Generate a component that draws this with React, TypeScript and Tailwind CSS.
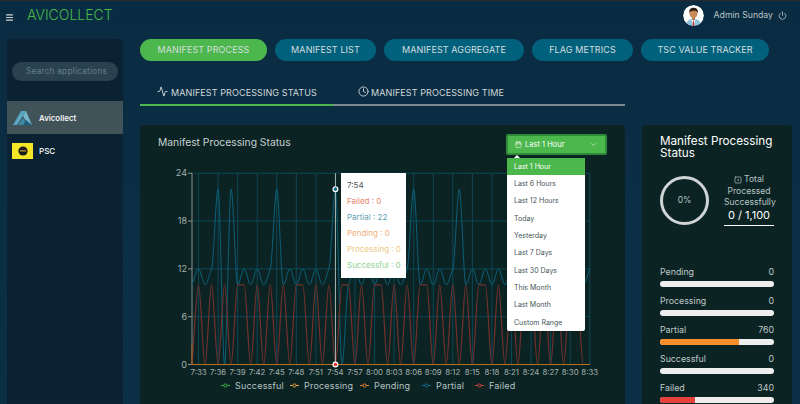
import React from 'react';
import { Activity, Calendar, ChevronDown, Clock, Menu, Power, SquareDot } from 'lucide-react';

const tabs = [
  { label: 'MANIFEST PROCESS', cls: 'w-[127px]' },
  { label: 'MANIFEST LIST', cls: 'w-[101px]' },
  { label: 'MANIFEST AGGREGATE', cls: 'w-[140px]' },
  { label: 'FLAG METRICS', cls: 'w-[101px]' },
  { label: 'TSC VALUE TRACKER', cls: 'w-[128px]' },
];
const ranges = ['Last 1 Hour', 'Last 6 Hours', 'Last 12 Hours', 'Today', 'Yesterday', 'Last 7 Days', 'Last 30 Days', 'This Month', 'Last Month', 'Custom Range'];
const yTicks = [0, 6, 12, 18, 24];
const legend = [
  { label: 'Successful', color: '#3fae49', cls: 'w-[69px]' },
  { label: 'Processing', color: '#e8a33d', cls: 'w-[70px]' },
  { label: 'Pending', color: '#e8822d', cls: 'w-[62px]' },
  { label: 'Partial', color: '#0f6f8c', cls: 'w-[53px]' },
  { label: 'Failed', color: '#d9403a', cls: 'w-[40px]' },
];
const stats = [
  { label: 'Pending', value: '0', pct: 0, color: '#f28c28' },
  { label: 'Processing', value: '0', pct: 0, color: '#f28c28' },
  { label: 'Partial', value: '760', pct: 69, color: '#f58f2c' },
  { label: 'Successful', value: '0', pct: 0, color: '#f28c28' },
  { label: 'Failed', value: '340', pct: 31, color: '#e8413c' },
];

// one point a minute from 7:32 to 8:33
const partial = [
  10, 12, 10, 12, 22, 0, 22, 10, 12, 10, 12, 10, 12, 22, 10, 12, 10, 12, 10, 12, 10, 12, 22, 0, 10, 12, 10, 12, 10, 12, 10,
  12, 10, 12, 22, 10, 12, 10, 12, 10, 12, 22, 10, 12, 10, 12, 10, 12, 10, 12, 10, 12, 10, 12, 10, 12, 10, 12, 10, 12, 10, 12,
];
const failedAt = [1, 3, 5, 7, 8, 10, 12, 14, 16, 17, 19, 21, 23, 24, 26, 28, 29, 31, 33, 35, 36, 38, 40, 42, 44, 45, 47, 49, 51, 52, 54, 56, 58, 59];
const failed = partial.map((_, i) => (failedAt.includes(i) ? 10 : 0));

const STEP = 6.52;
const X0 = 52;
const Y0 = 199.5;
const UNIT = 7.97;
const px = (i: number) => X0 + i * STEP;
const py = (v: number) => Y0 - v * UNIT;

// same idea as recharts' "monotone" line
const monotonePath = (values: number[]) => {
  const pts = values.map((v, i) => [px(i), py(v)]);
  const slopes = pts.slice(1).map((p, i) => (p[1] - pts[i][1]) / (p[0] - pts[i][0]));
  const tangents = pts.map((_, i) => {
    if (i === 0) return slopes[0];
    if (i === pts.length - 1) return slopes[i - 1];
    const a = slopes[i - 1];
    const b = slopes[i];
    if (a * b <= 0) return 0;
    const s = a < 0 ? -1 : 1;
    return s * Math.min(Math.abs(a), Math.abs(b), 0.25 * Math.abs(a + b));
  });
  let d = `M${pts[0][0]},${pts[0][1]}`;
  for (let i = 1; i < pts.length; i++) {
    const dx = (pts[i][0] - pts[i - 1][0]) / 3;
    d += `C${pts[i - 1][0] + dx},${pts[i - 1][1] + tangents[i - 1] * dx} ${pts[i][0] - dx},${pts[i][1] - tangents[i] * dx} ${pts[i][0]},${pts[i][1]}`;
  }
  return d;
};

const timeLabel = (i: number) => {
  const total = 7 * 60 + 33 + i * 3;
  return `${Math.floor(total / 60)}:${String(total % 60).padStart(2, '0')}`;
};

const Chart = () => (
  <svg width="485" height="214" className="block">
    {yTicks.map((t) => (
      <g key={t}>
        {t > 0 && <line x1={X0} x2={450} y1={py(t)} y2={py(t)} stroke="#0e4656" strokeWidth="1" />}
        <line x1={X0 - 4} x2={X0} y1={py(t)} y2={py(t)} stroke="#8d9a9a" strokeWidth="1" />
        <text x={X0 - 5} y={py(t) + 3} textAnchor="end" fontSize="9" fill="#a5b0b0">{t}</text>
      </g>
    ))}
    {Array.from({ length: 21 }, (_, i) => {
      const x = px(1 + i * 3);
      return (
        <g key={i}>
          <line x1={x} x2={x} y1={py(24)} y2={Y0} stroke="#0e4656" strokeWidth="1" />
          <text x={x} y={Y0 + 10.5} textAnchor="middle" fontSize="7.8" fill="#a5b0b0">{timeLabel(i)}</text>
        </g>
      );
    })}
    <line x1={X0} x2={X0} y1={py(24)} y2={Y0} stroke="#75827f" strokeWidth="1.2" />
    <path d={monotonePath(partial)} fill="none" stroke="#0b5f78" strokeWidth="1" />
    <path d={monotonePath(failed)} fill="none" stroke="#73302d" strokeWidth="1.2" />
    <path d={`M${X0},${Y0}V${Y0 - 19}`} fill="none" stroke="#a8641f" strokeWidth="1" />
    <line x1={X0} x2={450} y1={Y0} y2={Y0} stroke="#b9701f" strokeWidth="1" />
    <line x1={px(22)} x2={px(22)} y1={py(24)} y2={Y0} stroke="#aab3b2" strokeWidth="1" />
    <circle cx={px(22)} cy={py(22)} r="2.4" fill="#0f6f8c" stroke="#fff" strokeWidth="1.2" />
    <circle cx={px(22)} cy={py(0)} r="2.4" fill="#e3342f" stroke="#fff" strokeWidth="1.2" />
  </svg>
);

const AviLogo = () => (
  <svg width="20" height="16" viewBox="0 0 20 16">
    <path d="M0 15 L8 1 H13 L8 9 L4 15 Z" fill="#5ba6c0" />
    <path d="M13 1 L19 15 H15 L10 6 Z" fill="#74b6cc" />
    <path d="M5 15 L10 8 L14 15 Z" fill="#3d8aa6" />
    <path d="M10 15 L13 10 L19 15 Z" fill="#1d5f78" />
  </svg>
);

const PscLogo = () => (
  <div className="flex h-[16px] w-[21px] items-center justify-center bg-[#f5e725]">
    <svg width="10" height="10" viewBox="0 0 10 10">
      <circle cx="5" cy="5" r="4.6" fill="#1c1c1c" />
      <rect x="2" y="4.3" width="6" height="1.2" fill="#c9a227" />
    </svg>
  </div>
);

const Avatar = () => (
  <svg width="21" height="21" viewBox="0 0 21 21" className="rounded-full">
    <circle cx="10.5" cy="10.5" r="10.5" fill="#fff" />
    <path d="M3 21 C3 15 7 14 10.5 14 C14 14 18 15 18 21 Z" fill="#8fc3dc" />
    <path d="M8.5 14 L10.5 16 L12.5 14 L11 21 H10 Z" fill="#fff" />
    <path d="M10 16 H11 L11.4 21 H9.6 Z" fill="#c9302c" />
    <rect x="9" y="11" width="3" height="4" fill="#b97a4a" />
    <ellipse cx="10.5" cy="8.5" rx="4" ry="4.6" fill="#c98a58" />
    <path d="M6.3 8 C5.8 3.5 9 2.5 11 2.7 C14.5 3 15.2 5.5 14.7 8 C14 6 12.5 5.6 10.5 5.8 C8.5 6 7 6.2 6.3 8 Z" fill="#2b1d14" />
  </svg>
);

const LegendMark = ({ color }: { color: string }) => (
  <svg width="9" height="5" viewBox="0 0 9 5" className="shrink-0">
    <line x1="0" x2="9" y1="2.5" y2="2.5" stroke={color} strokeWidth="1" />
    <circle cx="4.5" cy="2.5" r="1.6" fill="#0b2423" stroke={color} strokeWidth="1" />
  </svg>
);

export default function App() {
  return (
    <div className="flex h-[404px] w-[800px] flex-col overflow-hidden border-t border-[#2a2a2a] bg-gradient-to-b from-[#0a2c42] to-[#0b3046] font-['Inter',sans-serif]">
      {/* Header */}
      <div className="flex h-[38px] shrink-0 items-start pt-1">
        <Menu size={9} strokeWidth={3} className="ml-[5px] mt-[8px] text-[#c8d0d0]" />
        <div className="ml-[13px] text-[14px] font-light leading-[20px] text-[#46b948]">AVICOLLECT</div>
        <div className="ml-auto flex items-center pr-[13px]">
          <Avatar />
          <span className="ml-[10px] text-[8.7px] text-[#b9c3c6]">Admin Sunday</span>
          <Power size={9} className="ml-[5px] text-[#c8d0d0]" />
        </div>
      </div>

      <div className="flex min-h-0 flex-1 pl-[7px]">
        {/* Sidebar */}
        <div className="w-[116px] shrink-0 rounded-t-sm bg-[#0a2231]">
          <div className="mx-[5px] mt-[23px] flex h-[19px] items-center rounded-full bg-[#2a424f] pl-[14px] text-[8.3px] tracking-[0.2px] text-[#667f86]">
            Search applications
          </div>
          <div className="mt-5 flex h-[33px] items-center gap-[6px] bg-[#3f5359] pl-[6px] text-[8px] font-medium text-white">
            <AviLogo />
            Avicollect
          </div>
          <div className="flex h-[33px] items-center gap-[6px] pl-[5px] text-[8px] font-medium text-white">
            <PscLogo />
            PSC
          </div>
        </div>

        {/* Main */}
        <div className="ml-[17px] min-w-0 flex-1">
          <div className="flex gap-2">
            {tabs.map((t, i) => (
              <div
                key={t.label}
                className={`flex h-[22px] items-center justify-center whitespace-nowrap rounded-full text-[9px] tracking-[0.1px] text-[#d5dedf] ${t.cls} ${
                  i === 0 ? 'bg-[#4cb74c]' : 'bg-[#01607c]'
                }`}
              >
                {t.label}
              </div>
            ))}
          </div>

          <div className="mt-[24px] flex h-[21px] w-[485px] border-b-2 border-[#7d8a8e] text-[9px] tracking-[0.1px] text-[#d0d8da]">
            <div className="-mb-[2px] flex h-[21px] w-[193px] items-start gap-[3px] border-b-2 border-[#4cb74c] pl-[17px] pt-[1px]">
              <Activity size={11} />
              MANIFEST PROCESSING STATUS
            </div>
            <div className="flex items-start gap-[2px] pl-[25px] pt-[1px]">
              <Clock size={11} />
              MANIFEST PROCESSING TIME
            </div>
          </div>

          <div className="mt-[19px] flex gap-[17px]">
            {/* Chart panel */}
            <div className="relative h-[279px] w-[485px] shrink-0 rounded-t-sm bg-[#0b2423]">
              <div className="flex h-[40px] items-start justify-between pl-[18px] pr-[18px] pt-[9px]">
                <div className="pt-[1px] text-[10.3px] leading-[14px] text-[#c8d0d0]">Manifest Processing Status</div>
                <div className="flex h-[21px] w-[101px] items-center rounded-[2px] border-2 border-[#2f8b3a] bg-[#4cb74c] pl-[7px] pr-[8px] text-[7.5px] text-white">
                  <Calendar size={7} />
                  <span className="ml-[3px]">Last 1 Hour</span>
                  <ChevronDown size={7} className="ml-auto" />
                </div>
              </div>
              <Chart />
              <div className="flex pl-[81px] text-[9px] tracking-[0.2px] text-[#b9c3c6]">
                {legend.map((l) => (
                  <div key={l.label} className={`flex items-center gap-[5px] ${l.cls}`}>
                    <LegendMark color={l.color} />
                    {l.label}
                  </div>
                ))}
              </div>

              {/* Tooltip */}
              <div className="absolute left-[201px] top-[48px] h-[105px] w-[65px] bg-white pl-[6px] pt-[6px] text-[8px] leading-[16.1px]">
                <div className="h-[14px] leading-[12px] text-[#555]">7:54</div>
                <div className="text-[#e8836f]">Failed : 0</div>
                <div className="text-[#5f9fb0]">Partial : 22</div>
                <div className="text-[#f0ae7a]">Pending : 0</div>
                <div className="text-[#eec77f]">Processing : 0</div>
                <div className="text-[#8fd28f]">Successful : 0</div>
              </div>

              {/* Range menu */}
              <div className="absolute left-[367px] top-[33px] w-[78px] rounded-[2px] bg-white text-[7px] text-[#46565a] shadow-sm">
                <div className="absolute -top-[3px] left-[7px] h-0 w-0 border-x-[3px] border-b-[3px] border-x-transparent border-b-white" />
                {ranges.map((r, i) => (
                  <div key={r} className={`flex h-[17.3px] items-center pl-[7px] pt-[1px] ${i === 0 ? 'bg-[#4cb74c] text-white' : ''}`}>
                    {r}
                  </div>
                ))}
              </div>
            </div>

            {/* Status card */}
            <div className="h-[279px] w-[150px] shrink-0 rounded-t-sm bg-[#0b2423] px-[18px] pt-[10px]">
              <div className="text-[11.7px] leading-[12px] text-white">Manifest Processing Status</div>
              <div className="mt-[10px] flex h-[62px] items-center justify-between">
                <div className="flex h-[49px] w-[49px] shrink-0 items-center justify-center rounded-full border-[3.5px] border-[#d0d4d4] text-[8.5px] text-[#b9c3c6]">
                  0%
                </div>
                <div className="w-[50px] text-center text-[8.6px] leading-[11.6px] text-[#b9c3c6]">
                  <div className="flex items-center justify-center gap-[2px]">
                    <SquareDot size={8} />
                    Total
                  </div>
                  <div>Processed</div>
                  <div className="whitespace-nowrap">Successfully</div>
                  <div className="border-b border-white pb-[3px] text-[11px] leading-[13px] text-white">0 / 1,100</div>
                </div>
              </div>
              <div className="mt-[34px]">
                {stats.map((s) => (
                  <div key={s.label} className="mb-[7px]">
                    <div className="flex h-[13px] items-center justify-between text-[8.8px] text-[#c0c9ca]">
                      <span>{s.label}</span>
                      <span>{s.value}</span>
                    </div>
                    <div className="mt-[3px] h-[6px] overflow-hidden rounded-full bg-[#eeeeee]">
                      <div className="h-full" style={{ width: `${s.pct}%`, backgroundColor: s.color }} />
                    </div>
                  </div>
                ))}
              </div>
            </div>
          </div>
        </div>
      </div>
    </div>
  );
}
